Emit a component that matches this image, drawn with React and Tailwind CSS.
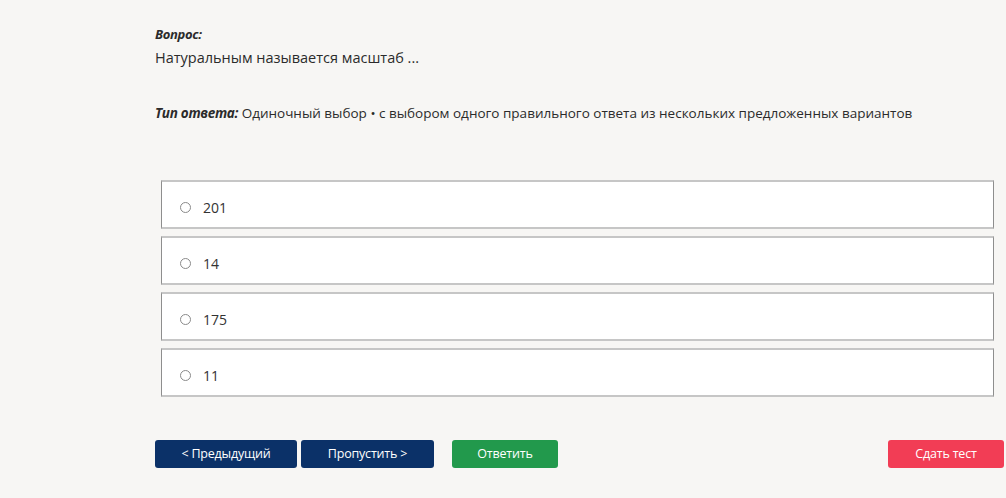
import React from "react";

const options = ["201", "14", "175", "11"];

export default function App() {
  return (
    <div className="min-h-screen bg-[#f7f6f4] font-['Open_Sans',sans-serif] text-[#2b2b2b] pl-[155px] pr-[2px] pt-[24px]">
      <div className="text-[13px] font-bold italic leading-[20px] tracking-[-0.3px]">Вопрос:</div>
      <div className="text-[14.5px] leading-[20px] mt-[4px]">Натуральным называется масштаб ...</div>
      <div className="mt-[35px] text-[13.5px] leading-[20px]">
        <span className="font-bold italic tracking-[-0.3px]">Тип ответа:</span> Одиночный выбор • с выбором одного правильного ответа из нескольких предложенных вариантов
      </div>
      <div className="mt-[57px] ml-[6px] mr-[10px] flex flex-col gap-[7px]">
        {options.map((o) => (
          <div
            key={o}
            className="h-[49px] bg-white border-y-2 border-y-[#c6c6c6] border-x border-x-[#8e8e8e] flex items-center pl-[18px] pt-[5px]"
          >
            <span className="w-[11px] h-[11px] rounded-full border border-[#8a8a8a] bg-white" />
            <span className="ml-[12px] text-[14px] text-[#333]">{o}</span>
          </div>
        ))}
      </div>
      <div className="mt-[43px] flex items-center text-[12.5px] text-white tracking-[-0.2px]">
        <button className="h-[28px] w-[142px] rounded-[3px] bg-[#0b3168]">&lt; Предыдущий</button>
        <button className="ml-[4px] h-[28px] w-[133px] rounded-[3px] bg-[#0b3168]">Пропустить &gt;</button>
        <button className="ml-[18px] h-[28px] w-[106px] rounded-[3px] bg-[#22994c]">Ответить</button>
        <button className="ml-auto h-[28px] w-[116px] rounded-[3px] bg-[#f23d55]">Сдать тест</button>
      </div>
    </div>
  );
}
